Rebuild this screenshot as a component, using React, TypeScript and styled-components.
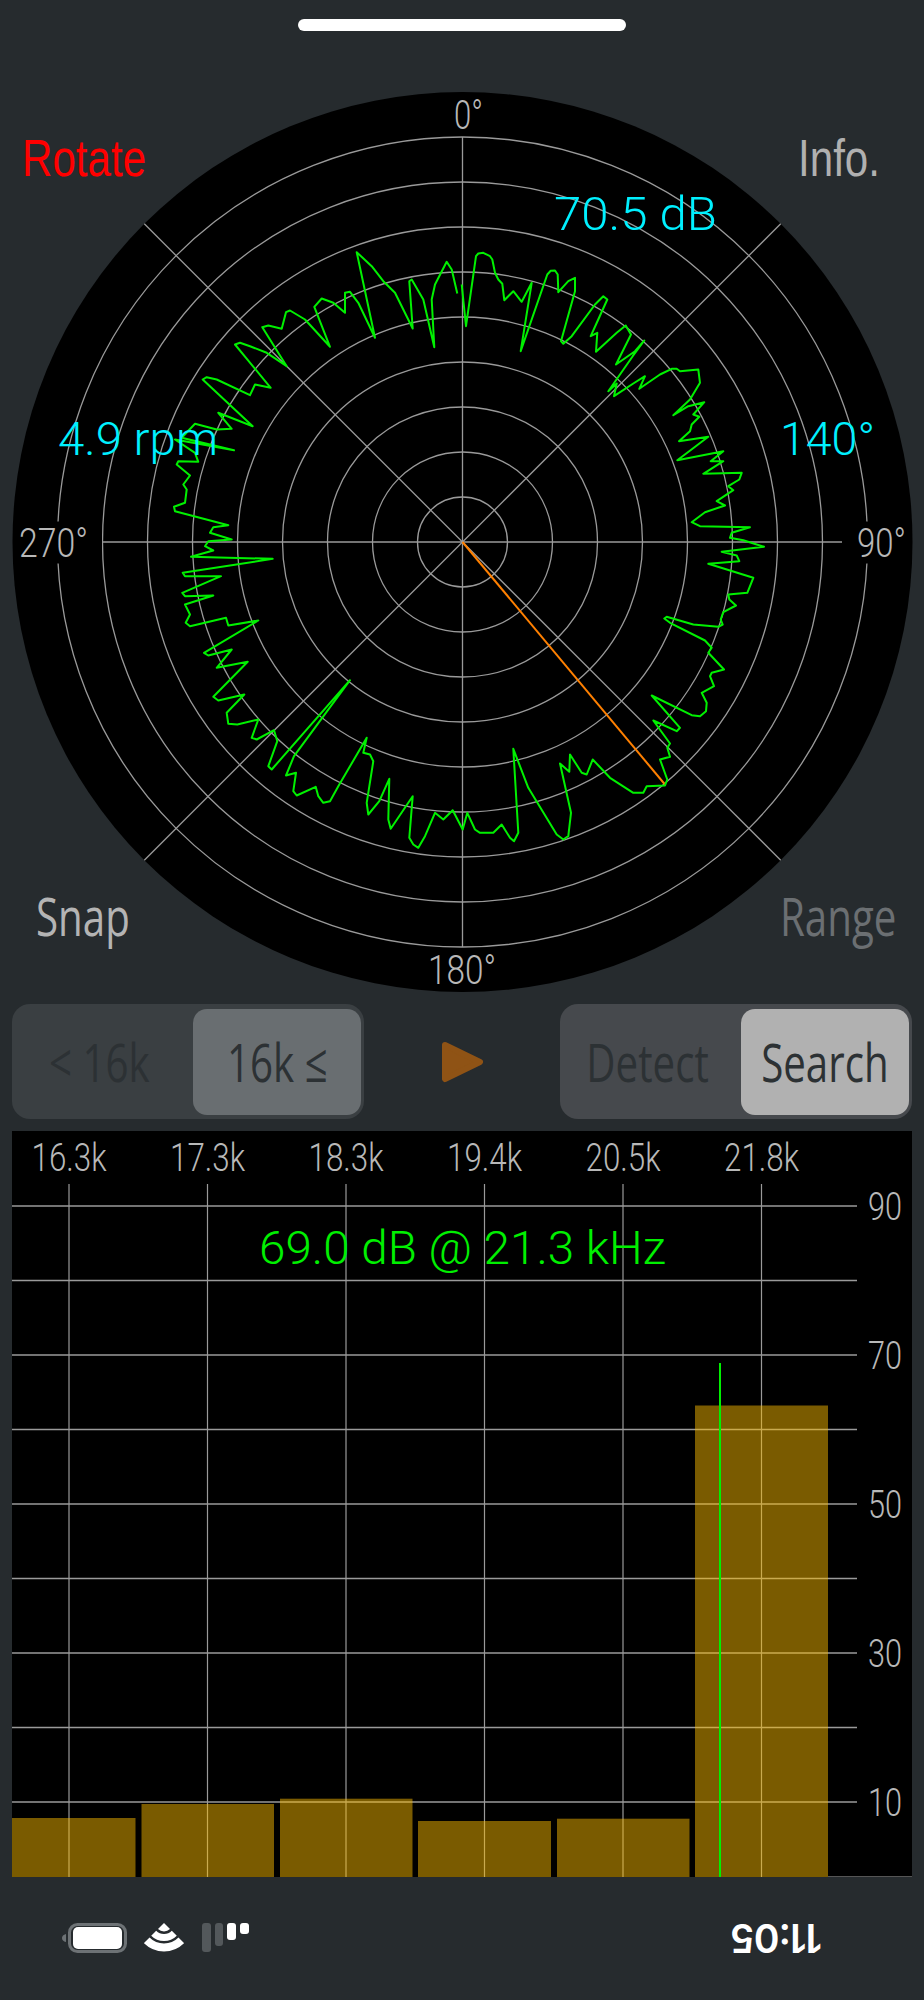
import React from 'react'
import styled, { createGlobalStyle } from 'styled-components'

type Pt = [number, number]

const GlobalStyle = createGlobalStyle`
  html, body {
    margin: 0;
    padding: 0;
    background: #262b2e;
  }
`

const Page = styled.div`
  width: 924px;
  height: 2000px;
  overflow: hidden;
  background: #262b2e;
  display: flex;
  flex-direction: column;
`

const TopBar = styled.div`
  height: 92px;
  padding-top: 19px;
  box-sizing: border-box;
  display: flex;
  justify-content: center;
`

const HomeIndicator = styled.div`
  width: 328px;
  height: 12px;
  border-radius: 6px;
  background: #fff;
`

const PolarSection = styled.section`
  position: relative;
  width: 924px;
  height: 900px;
  flex: none;
`

const PolarSvg = styled.svg`
  display: block;
`

const ChartText = styled.text<{ $size: number; $color: string }>`
  font-family: Roboto, 'Liberation Sans', sans-serif;
  font-weight: 300;
  font-size: ${(p) => p.$size}px;
  fill: ${(p) => p.$color};
`

const CornerButton = styled.div<{ $x: number; $y: number; $color: string; $serifless?: boolean; $squeeze: number }>`
  position: absolute;
  left: ${(p) => p.$x}px;
  top: ${(p) => p.$y}px;
  color: ${(p) => p.$color};
  font-family: ${(p) => (p.$serifless ? "'Liberation Sans'" : "'Open Sans'")}, sans-serif;
  font-size: ${(p) => (p.$serifless ? 52 : 53)}px;
  line-height: 60px;
  white-space: nowrap;
  transform: scaleX(${(p) => p.$squeeze});
  transform-origin: left top;
`

const Controls = styled.div`
  margin-top: 12px;
  height: 115px;
  padding: 0 12px;
  flex: none;
  display: flex;
  justify-content: space-between;
  align-items: center;
`

const Segment = styled.div<{ $bright?: boolean }>`
  width: 352px;
  height: 115px;
  box-sizing: border-box;
  padding: 5px 3px 4px 2px;
  border-radius: 18px;
  background: ${(p) => (p.$bright ? '#46494d' : '#3a3f42')};
  display: grid;
  grid-template-columns: 1fr 168px;
`

const SegmentOption = styled.div<{ $fill?: string }>`
  border-radius: 14px;
  background: ${(p) => p.$fill ?? 'transparent'};
  padding-right: ${(p) => (p.$fill ? 0 : 8)}px;
  display: flex;
  align-items: center;
  justify-content: center;
`

const SegmentText = styled.span<{ $squeeze: number }>`
  display: inline-block;
  font-family: 'Open Sans', sans-serif;
  font-size: 53px;
  line-height: 60px;
  color: #2c3134;
  white-space: nowrap;
  transform: scaleX(${(p) => p.$squeeze});
`

const PlayButton = styled.svg`
  width: 43px;
  height: 42px;
  display: block;
`

const SpectrumSection = styled.section`
  margin: 12px 0 0 12px;
  width: 900px;
  height: 746px;
  flex: none;
  background: #000;
`

const StatusRow = styled.div`
  height: 123px;
  box-sizing: border-box;
  padding: 0 62px 0 102px;
  flex: none;
  display: flex;
  align-items: center;
  justify-content: space-between;
  transform: rotate(180deg);
`

const Clock = styled.span`
  display: inline-block;
  width: 97px;
  font-family: Inter, 'Liberation Sans', sans-serif;
  font-weight: 600;
  font-size: 39px;
  line-height: 40px;
  letter-spacing: -1px;
  color: #fff;
  white-space: nowrap;
`

const StatusIcons = styled.div`
  display: flex;
  align-items: center;
  gap: 17.5px;
`

// traces are read off 3x crops of the display, one quadrant at a time
const toPage = (ox: number, oy: number, pts: Pt[]): Pt[] =>
  pts.map(([x, y]) => [ox + x / 3, oy + y / 3] as Pt)

const NE: Pt[] = [
  [5, 165], [18, 290], [48, 80], [55, 72], [70, 70], [90, 80], [97, 90], [105, 130], [115, 150], [127, 163],
  [133, 212], [160, 185], [185, 217], [215, 160], [182, 365], [262, 135], [272, 124], [285, 123], [293, 135],
  [295, 188], [325, 155], [345, 145], [345, 185], [303, 335], [310, 343], [335, 320], [405, 225], [430, 200],
  [442, 210], [408, 285], [392, 320], [412, 310], [408, 367], [470, 310], [497, 288], [513, 315], [468, 405],
  [525, 365], [553, 333], [518, 380], [445, 485], [470, 462], [462, 500], [520, 462], [555, 440], [538, 478],
  [600, 435], [635, 418], [650, 418], [660, 425], [715, 420], [720, 460], [690, 510], [640, 557], [685, 530],
  [733, 518], [700, 555], [718, 562], [695, 585], [690, 605], [657, 635], [745, 622], [652, 692], [790, 665],
  [752, 695], [790, 695], [730, 733], [845, 730], [838, 750], [805, 770], [820, 782], [770, 815], [795, 828],
  [735, 848], [695, 878], [720, 890], [870, 893], [815, 910], [810, 925], [850, 932],
]

const SE: Pt[] = [
  [912, 22], [785, 37], [830, 48], [838, 65], [745, 73], [880, 115], [862, 160], [805, 165], [808, 180],
  [828, 198], [790, 218], [782, 240], [788, 255], [775, 262], [700, 255], [620, 232], [613, 237], [630, 250],
  [735, 303], [755, 325], [745, 340], [792, 390], [755, 400], [750, 410], [762, 440], [725, 460], [740, 490],
  [738, 515], [720, 530], [695, 527], [575, 468], [660, 565], [650, 575], [580, 543], [630, 612], [622, 625],
  [630, 652], [600, 660], [622, 720], [615, 738], [560, 740], [550, 760], [520, 760], [450, 715], [398, 660],
  [380, 705], [365, 700], [330, 645], [328, 697], [300, 672], [333, 820], [325, 890], [310, 900], [290, 885],
  [205, 745], [160, 628], [175, 880], [162, 905], [150, 895], [125, 855], [100, 880], [60, 880], [45, 870],
  [22, 820], [8, 870],
]

const SW: Pt[] = [
  [908, 812], [880, 840], [855, 820], [825, 890], [805, 925], [790, 915], [778, 895], [788, 770], [722, 868],
  [715, 840], [718, 718], [688, 785], [655, 825], [650, 790], [670, 665], [660, 645], [640, 640], [650, 595],
  [565, 740], [540, 785], [520, 790], [505, 770], [497, 742], [440, 768], [430, 755], [438, 700], [408, 708],
  [432, 650], [600, 422], [365, 690], [355, 680], [382, 605], [372, 572], [320, 600], [305, 595], [325, 540],
  [262, 555], [235, 553], [230, 520], [283, 465], [205, 483], [190, 472], [293, 367], [200, 385], [245, 330],
  [175, 348], [162, 340], [325, 243], [235, 258], [228, 235], [120, 260], [107, 250], [120, 225], [105, 195],
  [190, 168], [105, 170], [97, 160], [213, 110], [105, 110], [98, 100], [368, 58], [123, 52], [190, 33],
  [165, 20], [175, 5], [245, 0],
]

const NW: Pt[] = [
  [180, 910], [190, 893], [235, 887], [75, 845], [72, 832], [105, 820], [110, 780], [100, 765], [120, 738],
  [80, 705], [85, 695], [145, 697], [135, 670], [75, 630], [252, 662], [95, 625], [135, 583], [200, 600],
  [245, 598], [205, 550], [308, 590], [158, 450], [170, 443], [200, 450], [300, 497], [315, 465], [362, 475],
  [255, 345], [270, 340], [300, 350], [350, 370], [410, 410], [337, 293], [355, 288], [395, 298], [408, 248],
  [420, 243], [465, 270], [540, 352], [493, 232], [515, 207], [550, 220], [585, 250], [585, 190], [600, 187],
  [625, 220], [675, 325], [620, 68], [665, 110], [700, 155], [735, 190], [788, 297], [778, 155], [785, 150],
  [820, 210], [853, 353], [845, 210], [855, 165], [890, 97], [905, 120], [922, 192],
]

const trace = [
  ...toPage(460, 230, NE),
  ...toPage(460, 540, SE),
  ...toPage(150, 540, SW),
  ...toPage(150, 230, NW),
]
  .map(([x, y]) => `${x.toFixed(1)},${y.toFixed(1)}`)
  .join(' ')

const CX = 462.5
const CY = 542.5
const RINGS = [45, 90, 135, 180, 225, 270, 315, 360, 405]
const DIAG = 450 * Math.SQRT1_2
const GRID = '#9a9a9a'

const PolarLabels: { text: string; x: number; y: number; w: number; size: number; color: string }[] = [
  { text: '0°', x: 454, y: 129, w: 29, size: 41, color: '#b8b8b8' },
  { text: '270°', x: 19, y: 557, w: 69, size: 41, color: '#b8b8b8' },
  { text: '90°', x: 857, y: 557, w: 49, size: 41, color: '#b8b8b8' },
  { text: '180°', x: 428, y: 984, w: 68, size: 41, color: '#b8b8b8' },
  { text: '70.5 dB', x: 554, y: 230, w: 163, size: 47, color: '#00f0ff' },
  { text: '4.9 rpm', x: 58, y: 455, w: 160, size: 47, color: '#00f0ff' },
  { text: '140°', x: 780, y: 455, w: 95, size: 47, color: '#00f0ff' },
]

const PolarChart = () => (
  <PolarSvg width={924} height={900} viewBox="0 92.5 924 900">
    <circle cx={CX} cy={CY} r={450} fill="#000" />
    <g fill="none" stroke={GRID} strokeWidth={1.3}>
      {RINGS.map((r) => (
        <circle key={r} cx={CX} cy={CY} r={r} />
      ))}
      <line x1={CX} y1={CY - 405} x2={CX} y2={CY + 405} />
      <line x1={CX - DIAG} y1={CY - DIAG} x2={CX + DIAG} y2={CY + DIAG} />
      <line x1={CX - DIAG} y1={CY + DIAG} x2={CX + DIAG} y2={CY - DIAG} />
    </g>
    <rect x={14} y={522} width={88} height={42} fill="#000" />
    <rect x={842} y={522} width={68} height={42} fill="#000" />
    <line x1={102} y1={CY} x2={842} y2={CY} stroke={GRID} strokeWidth={1.6} />
    <line x1={CX} y1={CY} x2={665} y2={785} stroke="#ff8000" strokeWidth={2} />
    <polyline points={trace} fill="none" stroke="#00f000" strokeWidth={2} strokeLinejoin="round" />
    {PolarLabels.map((l) => (
      <ChartText
        key={l.text}
        x={l.x}
        y={l.y}
        $size={l.size}
        $color={l.color}
        textLength={l.w}
        lengthAdjust="spacingAndGlyphs"
      >
        {l.text}
      </ChartText>
    ))}
  </PolarSvg>
)

const freqs = ['16.3k', '17.3k', '18.3k', '19.4k', '20.5k', '21.8k']
const levels = [90, 80, 70, 60, 50, 40, 30, 20, 10]
const levelY = (db: number) => 1876.5 - db * 7.45
const bars: [number, number, number][] = [
  [12, 135.5, 1818],
  [141.5, 274, 1804],
  [280, 412.5, 1798.7],
  [418, 551, 1821],
  [557, 689.5, 1818.7],
  [695, 828, 1405.5],
]

const SpectrumChart = () => (
  <PolarSvg width={900} height={746} viewBox="12 1131 900 746">
    {freqs.map((f, i) => {
      const x = 69 + i * 138.5
      return (
        <g key={f}>
          <line x1={x} y1={1184} x2={x} y2={1877} stroke={GRID} strokeWidth={1.2} />
          <ChartText
            x={x - 37.5}
            y={1171}
            $size={39}
            $color="#b8b8b8"
            textLength={75}
            lengthAdjust="spacingAndGlyphs"
          >
            {f}
          </ChartText>
        </g>
      )
    })}
    {levels.map((db) => (
      <g key={db}>
        <line x1={12} y1={levelY(db)} x2={857} y2={levelY(db)} stroke={GRID} strokeWidth={1.5} />
        {db % 20 === 10 && (
          <ChartText
            x={868}
            y={levelY(db) + 14}
            $size={39}
            $color="#b8b8b8"
            textLength={34}
            lengthAdjust="spacingAndGlyphs"
          >
            {db}
          </ChartText>
        )}
      </g>
    ))}
    <line x1={828} y1={1876.5} x2={912} y2={1876.5} stroke="#555" strokeWidth={1} />
    {bars.map(([x1, x2, top]) => (
      <rect key={x1} x={x1} y={top} width={x2 - x1} height={1877 - top} fill="#ffbe00" fillOpacity={0.48} />
    ))}
    <line x1={720} y1={1363} x2={720} y2={1877} stroke="#00f000" strokeWidth={2} />
    <ChartText x={259} y={1264} $size={47} $color="#00f000" textLength={407} lengthAdjust="spacingAndGlyphs">
      69.0 dB @ 21.3 kHz
    </ChartText>
  </PolarSvg>
)

const SignalIcon = () => (
  <svg width={47} height={30} viewBox="0 0 47 30">
    <rect x={0} y={19} width={9} height={11} rx={3} fill="#fff" />
    <rect x={13} y={13} width={9} height={17} rx={3} fill="#fff" />
    <rect x={26} y={7} width={8} height={23} rx={3} fill="#53585b" />
    <rect x={38} y={1} width={9} height={29} rx={3} fill="#53585b" />
  </svg>
)

const WifiIcon = () => (
  <svg width={40} height={30} viewBox="0 0 40 30">
    <path d="M20 30 L14 24 A8.5 8.5 0 0 1 26 24 Z" fill="#fff" />
    <path d="M9.7 19.7 A14.5 14.5 0 0 1 30.3 19.7" fill="none" stroke="#fff" strokeWidth={7} />
    <path d="M2.7 12.7 A24.5 24.5 0 0 1 37.3 12.7" fill="none" stroke="#fff" strokeWidth={8} />
  </svg>
)

const BatteryIcon = () => (
  <svg width={65} height={30} viewBox="0 0 65 30">
    <rect x={1.5} y={1.5} width={56} height={27} rx={8} fill="none" stroke="#6d7275" strokeWidth={3} />
    <rect x={5} y={4} width={49} height={22} rx={5} fill="#fff" />
    <path d="M61 11 Q65 12 65 15 Q65 18 61 19 Z" fill="#6d7275" />
  </svg>
)

const App = () => (
  <Page>
    <GlobalStyle />
    <TopBar>
      <HomeIndicator />
    </TopBar>
    <PolarSection>
      <PolarChart />
      <CornerButton $x={22} $y={36} $color="#ff0000" $serifless $squeeze={0.81}>
        Rotate
      </CornerButton>
      <CornerButton $x={798} $y={36} $color="#b0b0b0" $serifless $squeeze={0.81}>
        Info.
      </CornerButton>
      <CornerButton $x={36} $y={794} $color="#b4b4b4" $squeeze={0.76}>
        Snap
      </CornerButton>
      <CornerButton $x={780} $y={794} $color="#6b6f72" $squeeze={0.76}>
        Range
      </CornerButton>
    </PolarSection>
    <Controls>
      <Segment>
        <SegmentOption>
          <SegmentText $squeeze={0.76}>&lt; 16k</SegmentText>
        </SegmentOption>
        <SegmentOption $fill="#696e71">
          <SegmentText $squeeze={0.76}>16k ≤</SegmentText>
        </SegmentOption>
      </Segment>
      <PlayButton viewBox="0 0 43 42">
        <path d="M4 4 L39 21 L4 38 Z" fill="#8f5315" stroke="#8f5315" strokeWidth={6} strokeLinejoin="round" />
      </PlayButton>
      <Segment $bright>
        <SegmentOption>
          <SegmentText $squeeze={0.76}>Detect</SegmentText>
        </SegmentOption>
        <SegmentOption $fill="#b1b1b1">
          <SegmentText $squeeze={0.76}>Search</SegmentText>
        </SegmentOption>
      </Segment>
    </Controls>
    <SpectrumSection>
      <SpectrumChart />
    </SpectrumSection>
    <StatusRow>
      <Clock>11:05</Clock>
      <StatusIcons>
        <SignalIcon />
        <WifiIcon />
        <BatteryIcon />
      </StatusIcons>
    </StatusRow>
  </Page>
)

export default App
